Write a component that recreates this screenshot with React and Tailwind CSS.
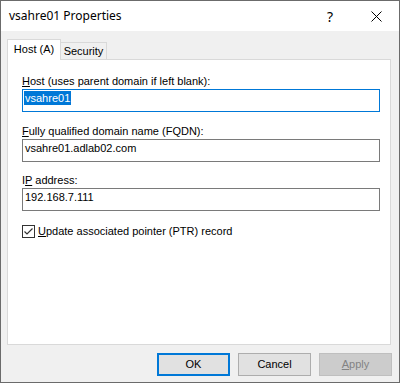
import React from "react";

const titleFont = { fontFamily: '"Segoe UI", "Noto Sans", sans-serif' };
const dlgFont = { fontFamily: '"Liberation Sans", Arial, sans-serif' };

function Field({ children, value, selected, focused }) {
  return (
    <div className="flex flex-col">
      <div className="h-[17px] leading-[15px] pt-[2px] text-[11px] text-black">{children}</div>
      <div
        className={
          "h-[23px] w-[358px] bg-white flex items-start pt-px px-px text-[11px] text-black border " +
          (focused ? "border-[#0078d7]" : "border-[#7a7a7a]")
        }
      >
        {selected ? (
          <span className="bg-[#0078d7] text-white leading-[14px] h-[14px] px-px">{value}</span>
        ) : (
          <span className="leading-[14px] h-[14px] px-px">{value}</span>
        )}
      </div>
    </div>
  );
}

export default function App() {
  return (
    <div
      className="w-[400px] h-[383px] border border-[#6b6b6b] bg-[#f0f0f0] flex flex-col overflow-hidden"
      style={dlgFont}
    >
      {/* Title bar */}
      <div className="h-[30px] bg-white flex items-center shrink-0" style={titleFont}>
        <div className="pl-[8px] text-[12px] text-black flex-1">vsahre01 Properties</div>
        <div className="w-[46px] h-[30px] flex items-center justify-center text-[14px] text-black">?</div>
        <div className="w-[46px] h-[30px] flex items-center justify-center">
          <svg width="11" height="11" viewBox="0 0 11 11">
            <path d="M0.5 0.5 L10.5 10.5 M10.5 0.5 L0.5 10.5" stroke="#000" strokeWidth="1" fill="none" />
          </svg>
        </div>
      </div>

      {/* Body */}
      <div className="flex-1 flex flex-col pt-[8px] px-[6px] pb-[6px]">
        {/* Tabs */}
        <div className="flex items-end h-[21px] -mb-px relative z-10">
          <div className="h-[21px] w-[54px] bg-white border border-b-0 border-[#d9d9d9] flex items-center justify-center text-[11px] text-black pb-px">
            Host (A)
          </div>
          <div className="h-[18px] w-[47px] -ml-px bg-[#f0f0f0] border border-[#d9d9d9] flex items-center justify-center text-[11px] text-black">
            Security
          </div>
        </div>

        {/* Panel */}
        <div className="h-[286px] w-[384px] bg-white border border-[#d9d9d9] pt-[12px] pl-[14px] flex flex-col">
          <Field value="vsahre01" selected focused>
            <span className="underline">H</span>ost (uses parent domain if left blank):
          </Field>
          <div className="h-[10px]" />
          <Field value="vsahre01.adlab02.com">
            <span className="underline">F</span>ully qualified domain name (FQDN):
          </Field>
          <div className="h-[9px]" />
          <Field value="192.168.7.111">
            I<span className="underline">P</span> address:
          </Field>
          <div className="flex items-center mt-[13px] gap-[3px]">
            <div className="w-[13px] h-[13px] border border-[#333333] bg-white flex items-center justify-center">
              <svg width="11" height="11" viewBox="0 0 11 11">
                <path d="M1.5 5.5 L4 8 L9.5 2.5" stroke="#333" strokeWidth="1.2" fill="none" />
              </svg>
            </div>
            <div className="text-[11px] text-black leading-[15px]">
              <span className="underline">U</span>pdate associated pointer (PTR) record
            </div>
          </div>
        </div>

        {/* Buttons */}
        <div className="flex justify-end gap-[8px] mt-[8px] w-[385px]">
          <div className="w-[73px] h-[23px] bg-[#e1e1e1] border-2 border-[#0078d7] flex items-center justify-center text-[11px] text-black">
            OK
          </div>
          <div className="w-[73px] h-[23px] bg-[#e1e1e1] border border-[#adadad] flex items-center justify-center text-[11px] text-black">
            Cancel
          </div>
          <div className="w-[73px] h-[23px] bg-[#cccccc] border border-[#bfbfbf] flex items-center justify-center text-[11px] text-[#838383]">
            <span><span className="underline">A</span>pply</span>
          </div>
        </div>
      </div>
    </div>
  );
}
